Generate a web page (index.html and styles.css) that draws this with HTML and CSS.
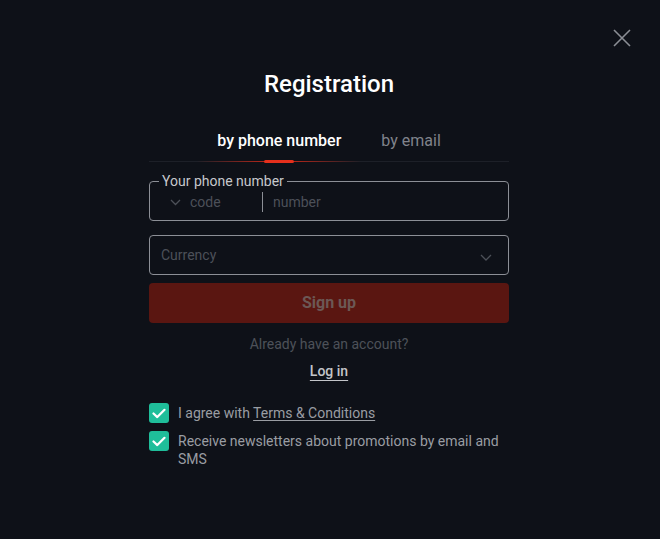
FILE: index.html
```html
<!DOCTYPE html>
<html>
<head>
<meta charset="utf-8">
<link rel="stylesheet" href="styles.css">
</head>
<body>
<div class="modal">
  <button class="close" aria-label="Close">
    <svg width="18" height="18" viewBox="0 0 18 18"><path d="M1 1L17 17M17 1L1 17" stroke="#8b8e95" stroke-width="1.6" fill="none"/></svg>
  </button>
  <div class="content">
    <h1 class="title">Registration</h1>
    <div class="tabs">
      <div class="tab active">by phone number<span class="glow"></span><span class="pill"></span></div>
      <div class="tab">by email</div>
    </div>
    <fieldset class="phone">
      <legend>Your phone number</legend>
      <div class="phone-row">
        <svg class="chev-sm" width="11" height="7" viewBox="0 0 11 7"><path d="M1 1l4.5 4.5L10 1" stroke="#4c5058" stroke-width="1.3" fill="none"/></svg>
        <span class="code">code</span>
        <span class="sep"></span>
        <span class="number">number</span>
      </div>
    </fieldset>
    <div class="select">
      <span>Currency</span>
      <svg width="12" height="7" viewBox="0 0 12 7"><path d="M1 1l5 5 5-5" stroke="#4c5058" stroke-width="1.3" fill="none"/></svg>
    </div>
    <button class="signup">Sign up</button>
    <p class="already">Already have an account?</p>
    <a class="login">Log in</a>
    <div class="checks">
      <label class="check">
        <span class="box"><svg width="14" height="11" viewBox="0 0 14 11"><path d="M1.5 5.5l3.8 3.6L12.5 1.8" stroke="#fff" stroke-width="2.2" fill="none" stroke-linecap="round" stroke-linejoin="round"/></svg></span>
        <span class="ctext">I agree with <u>Terms &amp; Conditions</u></span>
      </label>
      <label class="check">
        <span class="box"><svg width="14" height="11" viewBox="0 0 14 11"><path d="M1.5 5.5l3.8 3.6L12.5 1.8" stroke="#fff" stroke-width="2.2" fill="none" stroke-linecap="round" stroke-linejoin="round"/></svg></span>
        <span class="ctext">Receive newsletters about promotions by email and SMS</span>
      </label>
    </div>
  </div>
</div>
</body>
</html>
```

FILE: styles.css
```css
* { box-sizing: border-box; }
html, body { margin: 0; padding: 0; }
body {
  background: #0e1118;
  font-family: Roboto, "Liberation Sans", sans-serif;
  width: 660px;
  height: 539px;
  overflow: hidden;
}
.modal {
  position: relative;
  width: 660px;
  height: 539px;
  padding-top: 68px;
}
.close {
  position: absolute;
  top: 29px;
  left: 613px;
  background: none;
  border: 0;
  padding: 0;
  width: 18px;
  height: 18px;
  display: block;
}
.close svg { display: block; }
.content {
  width: 360px;
  margin-left: 149px;
  display: flex;
  flex-direction: column;
}
.title {
  margin: 1px 0 0;
  text-align: center;
  color: #ffffff;
  font-size: 24px;
  font-weight: 500;
  line-height: 30px;
  height: 30px;
}
.tabs {
  margin-top: 32px;
  display: flex;
  justify-content: center;
  border-bottom: 1px solid #1d2028;
  height: 31px;
}
.tab {
  position: relative;
  padding: 0 20px;
  font-size: 16px;
  line-height: 20px;
  color: #80838b;
}
.tab.active {
  color: #ffffff;
  font-weight: 500;
}
.glow {
  position: absolute;
  left: 0;
  right: 0;
  bottom: -1px;
  height: 1px;
  background: linear-gradient(90deg, rgba(230,40,20,0) 0%, rgba(230,40,20,0.9) 50%, rgba(230,40,20,0) 100%);
}
.pill {
  position: absolute;
  left: 50%;
  margin-left: -15px;
  width: 30px;
  height: 3px;
  bottom: -2px;
  border-radius: 2px;
  background: #e5301c;
}
.phone {
  margin: 12px 0 0 0;
  padding: 0 12px 0 12px;
  border: 1px solid #8c8f96;
  border-radius: 4px;
  height: 47px;
  min-width: 0;
}
.phone legend {
  padding: 0 3px;
  margin-left: -3px;
  color: #c6c8cc;
  font-size: 14px;
  line-height: 14px;
}
.phone-row {
  display: flex;
  align-items: center;
  height: 31px;
  margin-top: -2px;
  font-size: 14px;
  color: #4c5058;
}
.chev-sm { margin-left: 8px; margin-right: 9px; margin-top: 2px; }
.code { width: 72px; }
.sep {
  width: 1px;
  height: 20px;
  background: #8c8f96;
  margin-right: 10px;
}
.select {
  margin-top: 14px;
  height: 40px;
  border: 1px solid #8c8f96;
  border-radius: 4px;
  display: flex;
  align-items: center;
  justify-content: space-between;
  padding: 0 16px 0 11px;
  font-size: 14px;
  color: #4c5058;
}
.select svg { margin-top: 4px; }
.signup {
  margin-top: 8px;
  height: 40px;
  border: 0;
  border-radius: 4px;
  background: #5a1611;
  color: #6c5855;
  font-family: inherit;
  font-size: 16px;
  font-weight: 700;
  padding: 0 0 2px;
}
.already {
  margin: 13px 0 0;
  text-align: center;
  font-size: 14px;
  line-height: 16px;
  color: #4d5159;
}
.login {
  align-self: center;
  margin-top: 11px;
  font-size: 14px;
  line-height: 16px;
  font-weight: 500;
  color: #c3c5c9;
  text-decoration: underline;
  text-underline-offset: 4px;
  text-decoration-thickness: 1px;
}
.checks {
  margin-top: 24px;
  display: flex;
  flex-direction: column;
  gap: 8px;
}
.check {
  display: flex;
  align-items: flex-start;
  gap: 9px;
}
.box {
  flex: none;
  width: 20px;
  height: 20px;
  border-radius: 3px;
  background: #1fbe9a;
  display: flex;
  align-items: center;
  justify-content: center;
}
.ctext {
  font-size: 14px;
  line-height: 18px;
  padding-top: 1px;
  color: #9a9da3;
  padding-right: 8px;
}
.ctext u { text-underline-offset: 2px; }
```
